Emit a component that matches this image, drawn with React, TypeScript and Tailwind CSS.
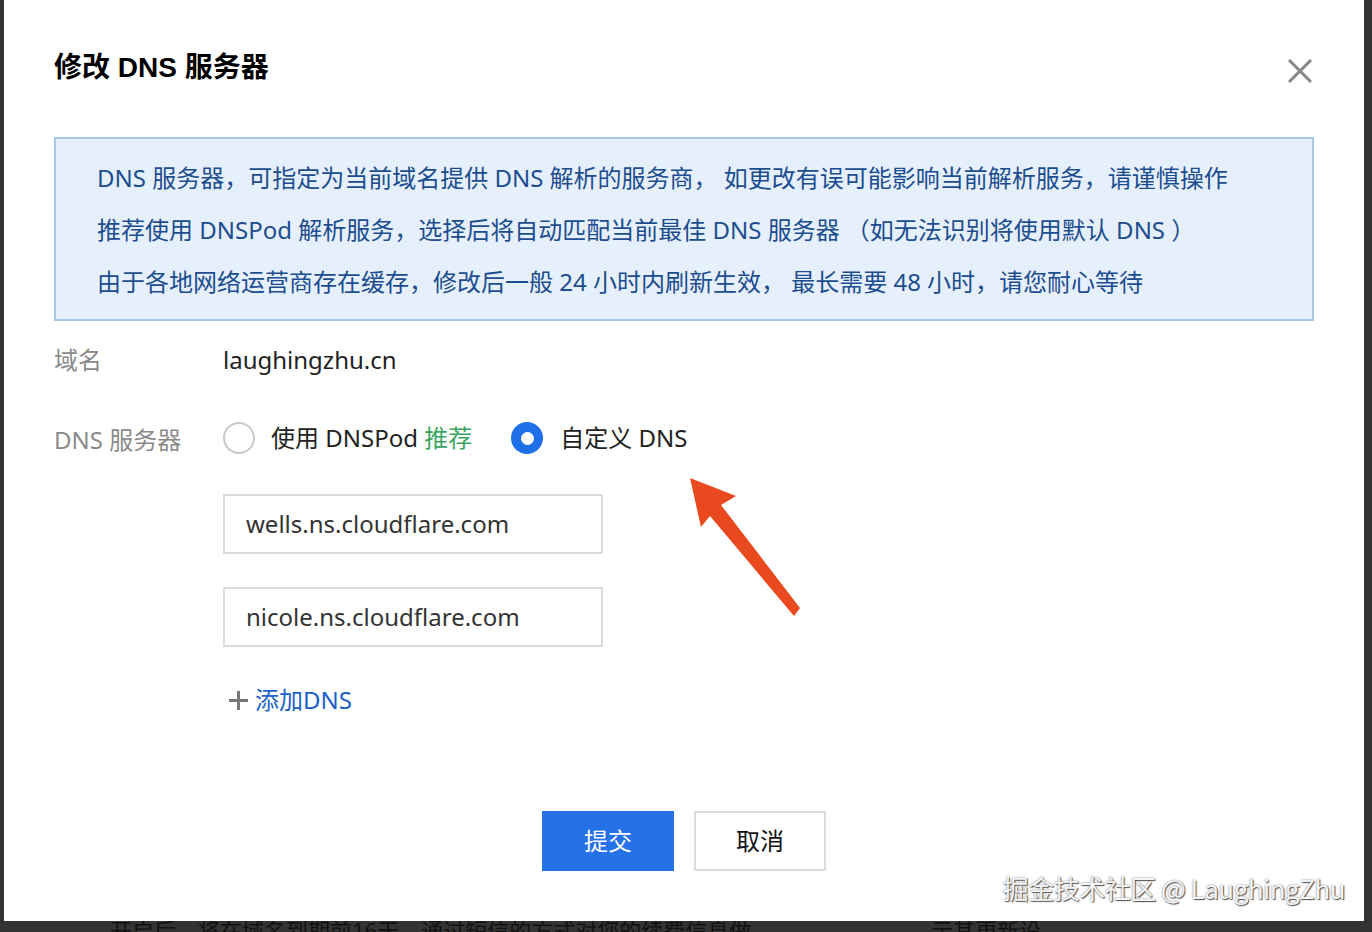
import React from "react";

const FONT = "font-['Noto_Sans','Noto_Sans_CJK_SC',sans-serif]";

const notices = [
  "DNS 服务器，可指定为当前域名提供 DNS 解析的服务商， 如更改有误可能影响当前解析服务，请谨慎操作",
  "推荐使用 DNSPod 解析服务，选择后将自动匹配当前最佳 DNS 服务器 （如无法识别将使用默认 DNS ）",
  "由于各地网络运营商存在缓存，修改后一般 24 小时内刷新生效， 最长需要 48 小时，请您耐心等待",
];

const servers = ["wells.ns.cloudflare.com", "nicole.ns.cloudflare.com"];

const Radio = ({ checked }: { checked?: boolean }) =>
  checked ? (
    <span className="w-[32px] h-[32px] rounded-full bg-[#1f6fe8] flex items-center justify-center shrink-0">
      <span className="w-[13px] h-[13px] rounded-full bg-white" />
    </span>
  ) : (
    <span className="w-[32px] h-[32px] rounded-full border-2 border-[#c9c9c9] bg-white shrink-0" />
  );

export default function App() {
  return (
    <div className={`w-[1372px] h-[932px] overflow-hidden bg-[#333333] relative ${FONT}`}>
      {/* modal */}
      <div className="ml-[4px] w-[1360px] h-[921px] bg-white relative flex flex-col pl-[50px] pr-[50px]">
        {/* header */}
        <div className="flex items-center justify-between h-[32px] mt-[52px]">
          <h2 className="text-[28px] font-bold text-black leading-[32px] font-['Liberation_Sans','Noto_Sans_CJK_SC',sans-serif]">
            修改 DNS 服务器
          </h2>
          <button className="w-[26px] h-[26px] flex items-center justify-center mr-[1px] mt-[5px]">
            <svg width="24" height="24" viewBox="0 0 24 24" fill="none" stroke="#878787" strokeWidth="3" strokeLinecap="square">
              <path d="M2 2 L22 22 M22 2 L2 22" />
            </svg>
          </button>
        </div>

        {/* info box */}
        <div className="mt-[53px] w-[1260px] bg-[#e6f0fd] border-2 border-[#a9c8e6] pl-[41px] pt-[13px] pb-[11px]">
          {notices.map((t, i) => (
            <p key={i} className="text-[24px] leading-[52px] text-[#1c4d8f] whitespace-nowrap">
              {t}
            </p>
          ))}
        </div>

        {/* domain row */}
        <div className="flex items-center mt-[24px] h-[30px]">
          <span className="w-[169px] text-[24px] text-[#8a8a8a]">域名</span>
          <span className="text-[24px] text-[#222]">laughingzhu.cn</span>
        </div>

        {/* dns row */}
        <div className="flex items-start mt-[46px]">
          <span className="w-[169px] text-[24px] text-[#8a8a8a] leading-[34px] mt-[2px]">DNS 服务器</span>
          <div className="flex flex-col">
            <div className="flex items-center h-[34px]">
              <Radio />
              <span className="ml-[16px] text-[24px] text-[#222]">
                使用 DNSPod <span className="text-[#3aa55e]">推荐</span>
              </span>
              <span className="ml-[39px]">
                <Radio checked />
              </span>
              <span className="ml-[17px] text-[24px] text-[#222]">自定义 DNS</span>
            </div>

            <div className="flex flex-col gap-[33px] mt-[39px]">
              {servers.map((s) => (
                <div
                  key={s}
                  className="w-[380px] h-[60px] border-2 border-[#dcdcdc] flex items-center pl-[21px] text-[24px] text-[#333]"
                >
                  {s}
                </div>
              ))}
            </div>

            <div className="flex items-center mt-[38px] ml-[5px] h-[30px]">
              <svg width="21" height="21" viewBox="0 0 21 21" stroke="#777" strokeWidth="3">
                <path d="M10.5 1 V20 M1 10.5 H20" />
              </svg>
              <span className="ml-[6px] text-[24px] text-[#1b62c6]">添加DNS</span>
            </div>
          </div>
        </div>

        {/* footer buttons */}
        <div className="flex justify-center gap-[20px] mt-[96px]">
          <button className="w-[132px] h-[60px] bg-[#2670e8] text-white text-[24px]">提交</button>
          <button className="w-[132px] h-[60px] border-2 border-[#dcdcdc] bg-white text-[#111] text-[24px]">取消</button>
        </div>

        {/* annotation arrow */}
        <svg className="absolute left-[676px] top-[470px]" width="130" height="155" viewBox="676 470 130 155">
          <polygon
            points="686,478 732,496 717,505 796,608 790,616 706,516 697,527"
            fill="#e8491f"
            strokeLinejoin="round"
          />
        </svg>

        {/* watermark */}
        <div className="absolute right-[19px] bottom-[14px] text-[26px] text-[#f4f4f4] tracking-[-0.5px] [text-shadow:1px_1px_1px_#555,0_0_2px_#777] font-['Noto_Sans_CJK_SC',sans-serif]">
          掘金技术社区 @ LaughingZhu
        </div>
      </div>

      {/* page content peeking below overlay */}
      <div className="flex text-[22px] text-[#111] leading-[22px] -mt-[2px]">
        <span className="ml-[110px]">开启后，将在域名到期前16天，通过短信的方式对您的续费信息做</span>
        <span className="ml-[180px]">示其更新设</span>
      </div>
    </div>
  );
}
